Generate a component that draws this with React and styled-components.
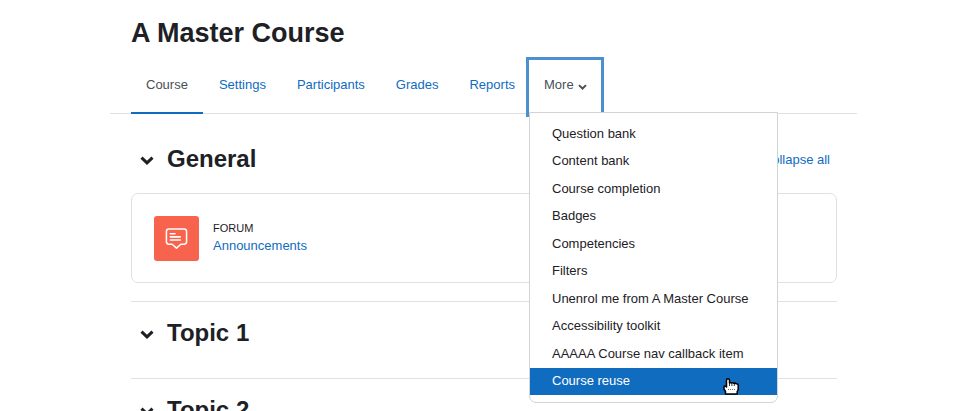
import React from "react";
import styled, { createGlobalStyle } from "styled-components";

const GlobalStyle = createGlobalStyle`
  *, *::before, *::after { box-sizing: border-box; }
  body {
    margin: 0;
    background: #fff;
    color: #1d2125;
    font-family: "Liberation Sans", Arial, sans-serif;
    font-size: 13px;
    line-height: 20px;
  }
  h1, h2, p, ul { margin: 0; padding: 0; }
  ul { list-style: none; }
`;

const Page = styled.div`
  height: 100vh;
  overflow: hidden;
  padding: 16px 104px 0 110px;
`;

const Title = styled.h1`
  padding: 0 20px 0 21px;
  font-size: 27px;
  line-height: 34px;
`;

const TabBar = styled.nav`
  margin-top: 10px;
  border-bottom: 1px solid #dee2e6;
`;

const TabList = styled.ul`
  display: flex;
  gap: 1px;
  padding: 0 20px 0 21px;
  margin-bottom: -1px;
`;

const TabItem = styled.li`
  position: relative;
`;

const MoreItem = styled(TabItem)`
  margin-left: -2px;
`;

const TabLink = styled.a`
  display: block;
  padding: 15px 15px 17px;
  border-bottom: 2px solid ${(p) => (p.$active ? "#0f6cbf" : "transparent")};
  color: ${(p) => (p.$active ? "#495057" : "#0f6cbf")};
  text-decoration: none;
`;

const MoreButton = styled.button`
  display: flex;
  align-items: center;
  gap: 4px;
  height: 54px;
  padding: 0 14px 4px 15px;
  border: 0;
  background: #fff;
  color: #495057;
  font: inherit;
  outline: 3px solid #4b91cf;

  svg { margin-top: 3px; }
`;

const Menu = styled.div`
  position: absolute;
  top: 52px;
  left: 0;
  z-index: 2;
  width: max-content;
  min-width: 249px;
  padding: 7px 0;
  border: 1px solid #d2d3d4;
  border-radius: 0 0 7px 7px;
  background: #fff;
`;

const MenuList = styled.ul`
  display: grid;
  grid-auto-rows: 1fr;
  min-height: 275px;
`;

const MenuLink = styled.a`
  display: flex;
  align-items: center;
  height: 100%;
  padding: 0 21px 0 22px;
  background: ${(p) => (p.$active ? "#0f6cbf" : "transparent")};
  color: ${(p) => (p.$active ? "#fff" : "#1d2125")};
  text-decoration: none;
`;

const Pointer = styled.svg`
  position: absolute;
  right: 37px;
  bottom: 7px;
`;

const Content = styled.main`
  padding: 0 20px 0 21px;
`;

const Section = styled.section`
  padding: ${(p) => (p.$first ? "27px 0 18px" : "13px 0 27px")};
  border-top: ${(p) => (p.$first ? "0" : "1px solid #dee2e6")};
`;

const SectionHeader = styled.div`
  display: flex;
  align-items: center;
  height: 36px;
`;

const Toggle = styled.button`
  display: grid;
  place-items: center;
  width: 32px;
  height: 32px;
  margin-right: 4px;
  padding: 2px 0 0;
  border: 0;
  background: none;
  color: #1d2125;
`;

const SectionTitle = styled.h2`
  font-size: 24px;
  line-height: 36px;
`;

const CollapseLink = styled.a`
  margin-left: auto;
  padding: 2px 7px 0 0;
  color: #0f6cbf;
  text-decoration: none;
`;

const Card = styled.article`
  display: flex;
  align-items: flex-start;
  gap: 14px;
  margin-top: 16px;
  padding: 22px 22px 21px;
  border: 1px solid #dee2e6;
  border-radius: 7px;
`;

const IconTile = styled.div`
  display: grid;
  place-items: center;
  width: 45px;
  height: 45px;
  border-radius: 3px;
  background: #f7634d;
`;

const ActivityText = styled.div`
  padding-top: 4px;
`;

const ActivityType = styled.p`
  font-size: 11px;
  line-height: 16px;
`;

const ActivityLink = styled.a`
  display: block;
  color: #0f6cbf;
  text-decoration: none;
`;

const tabs = ["Course", "Settings", "Participants", "Grades", "Reports"];
const menuItems = [
  "Question bank",
  "Content bank",
  "Course completion",
  "Badges",
  "Competencies",
  "Filters",
  "Unenrol me from A Master Course",
  "Accessibility toolkit",
  "AAAAA Course nav callback item",
  "Course reuse",
];
const topics = ["Topic 1", "Topic 2"];

function Chevron({ width, height }) {
  return (
    <svg width={width} height={height} viewBox="0 0 14 9" fill="none" aria-hidden="true">
      <path d="M1.500 1.600 7 6.900l5.500-5.300" stroke="currentColor" strokeWidth="3" />
    </svg>
  );
}

function ForumIcon() {
  return (
    <svg width="23" height="23" viewBox="0 0 24 24" fill="none" stroke="#fff" strokeWidth="1.600" strokeLinecap="round" strokeLinejoin="round" aria-hidden="true">
      <path d="M4 2h16a2.500 2.500 0 0 1 2.500 2.500v11A2.500 2.500 0 0 1 20 18h-3.500L12 22l-4.500-4H4a2.500 2.500 0 0 1-2.500-2.500v-11A2.500 2.500 0 0 1 4 2Z" />
      <path d="M5.500 7h5M5.500 10.300h10.500M5.500 13.600h10.500" />
    </svg>
  );
}

function HandPointer() {
  return (
    <Pointer width="17" height="17" viewBox="0 0 17 17" aria-hidden="true">
      <path
        d="M3.500 2Q3.500.8 5 .8T6.500 2v3q1-.7 2.200 0 1.200-.6 2.300.3 1.200-.5 2.200.4 1.800-.2 2 1.300v4.500l-1 2V16H2.500v-2.500L1 11V8.500q1-1 2.500.5Z"
        fill="#fff"
        stroke="#000"
        strokeWidth="1.500"
        strokeLinejoin="round"
      />
      <path d="M6.500 5v3M8.900 5.500V8M11.300 6v2" stroke="#000" strokeWidth="0.800" />
      <path d="M5 11.500h8" stroke="#777" strokeDasharray="1 1" />
    </Pointer>
  );
}

function CourseSection({ title, first, children }) {
  return (
    <Section $first={first}>
      <SectionHeader>
        <Toggle type="button" aria-label={`Collapse ${title}`} aria-expanded="true">
          <Chevron width={14} height={9} />
        </Toggle>
        <SectionTitle>{title}</SectionTitle>
        {first && <CollapseLink href="#collapse">Collapse all</CollapseLink>}
      </SectionHeader>
      {children}
    </Section>
  );
}

export default function App() {
  return (
    <>
      <GlobalStyle />
      <Page>
        <Title>A Master Course</Title>
        <TabBar>
          <TabList>
            {tabs.map((tab, i) => (
              <TabItem key={tab}>
                <TabLink href="#tab" $active={i === 0}>{tab}</TabLink>
              </TabItem>
            ))}
            <MoreItem>
              <MoreButton type="button" aria-haspopup="true" aria-expanded="true">
                More <Chevron width={9} height={6} />
              </MoreButton>
              <Menu>
                <MenuList>
                  {menuItems.map((item) => (
                    <li key={item}>
                      <MenuLink href="#item" $active={item === "Course reuse"}>{item}</MenuLink>
                    </li>
                  ))}
                </MenuList>
                <HandPointer />
              </Menu>
            </MoreItem>
          </TabList>
        </TabBar>
        <Content>
          <CourseSection title="General" first>
            <Card>
              <IconTile><ForumIcon /></IconTile>
              <ActivityText>
                <ActivityType>FORUM</ActivityType>
                <ActivityLink href="#announcements">Announcements</ActivityLink>
              </ActivityText>
            </Card>
          </CourseSection>
          {topics.map((topic) => <CourseSection key={topic} title={topic} />)}
        </Content>
      </Page>
    </>
  );
}
